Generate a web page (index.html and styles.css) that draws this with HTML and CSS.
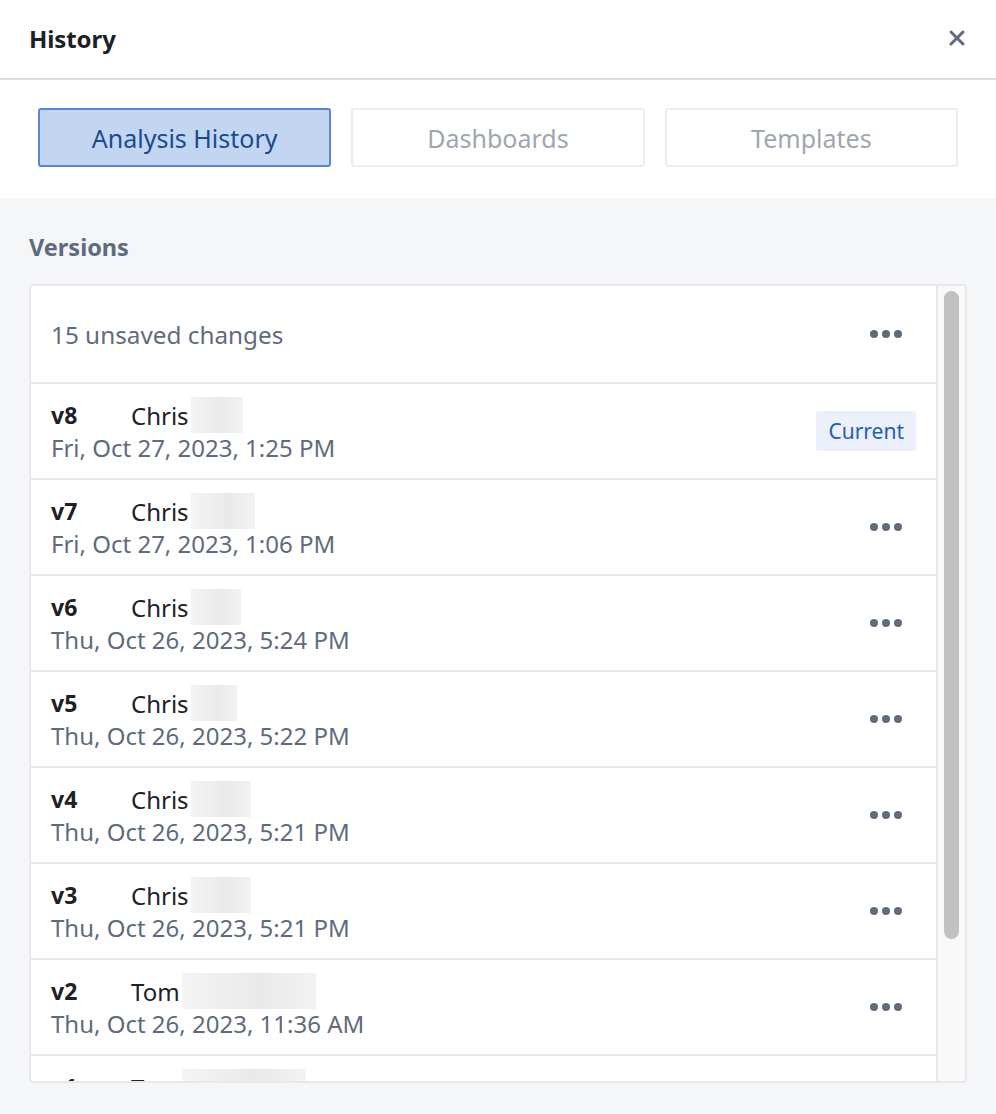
FILE: index.html
```html
<!DOCTYPE html>
<html>
<head>
<meta charset="utf-8">
<link rel="stylesheet" href="styles.css">
</head>
<body>
<div class="panel">
  <header class="header">
    <h1 class="title">History</h1>
    <svg class="close" width="18" height="18" viewBox="0 0 18 18"><path d="M3 3L15 15M15 3L3 15" stroke="#5f6b7c" stroke-width="3" stroke-linecap="round"/></svg>
  </header>
  <div class="tabs">
    <div class="tab active">Analysis History</div>
    <div class="tab">Dashboards</div>
    <div class="tab">Templates</div>
  </div>
  <section class="body">
    <h2 class="section-title">Versions</h2>
    <div class="list">
      <div class="rows">
        <div class="row unsaved">
          <span class="unsaved-text">15 unsaved changes</span>
          <span class="dots"><i></i><i></i><i></i></span>
        </div>
        <div class="row">
          <div class="info">
            <div class="line1"><span class="ver">v8</span><span class="name">Chris</span><span class="blur" style="width:52px"></span></div>
            <div class="date">Fri, Oct 27, 2023, 1:25 PM</div>
          </div>
          <span class="badge">Current</span>
        </div>
        <div class="row">
          <div class="info">
            <div class="line1"><span class="ver">v7</span><span class="name">Chris</span><span class="blur" style="width:64px"></span></div>
            <div class="date">Fri, Oct 27, 2023, 1:06 PM</div>
          </div>
          <span class="dots"><i></i><i></i><i></i></span>
        </div>
        <div class="row">
          <div class="info">
            <div class="line1"><span class="ver">v6</span><span class="name">Chris</span><span class="blur" style="width:50px"></span></div>
            <div class="date">Thu, Oct 26, 2023, 5:24 PM</div>
          </div>
          <span class="dots"><i></i><i></i><i></i></span>
        </div>
        <div class="row">
          <div class="info">
            <div class="line1"><span class="ver">v5</span><span class="name">Chris</span><span class="blur" style="width:46px"></span></div>
            <div class="date">Thu, Oct 26, 2023, 5:22 PM</div>
          </div>
          <span class="dots"><i></i><i></i><i></i></span>
        </div>
        <div class="row">
          <div class="info">
            <div class="line1"><span class="ver">v4</span><span class="name">Chris</span><span class="blur" style="width:60px"></span></div>
            <div class="date">Thu, Oct 26, 2023, 5:21 PM</div>
          </div>
          <span class="dots"><i></i><i></i><i></i></span>
        </div>
        <div class="row">
          <div class="info">
            <div class="line1"><span class="ver">v3</span><span class="name">Chris</span><span class="blur" style="width:60px"></span></div>
            <div class="date">Thu, Oct 26, 2023, 5:21 PM</div>
          </div>
          <span class="dots"><i></i><i></i><i></i></span>
        </div>
        <div class="row">
          <div class="info">
            <div class="line1"><span class="ver">v2</span><span class="name">Tom</span><span class="blur" style="width:134px"></span></div>
            <div class="date">Thu, Oct 26, 2023, 11:36 AM</div>
          </div>
          <span class="dots"><i></i><i></i><i></i></span>
        </div>
        <div class="row">
          <div class="info">
            <div class="line1"><span class="ver">v1</span><span class="name">Tom</span><span class="blur" style="width:124px"></span></div>
            <div class="date">Thu, Oct 26, 2023, 11:30 AM</div>
          </div>
          <span class="dots"><i></i><i></i><i></i></span>
        </div>
      </div>
      <div class="scrollbar"><div class="thumb"></div></div>
    </div>
  </section>
</div>
</body>
</html>
```

FILE: styles.css
```css
* { box-sizing: border-box; margin: 0; padding: 0; }
html, body { width: 996px; height: 1114px; overflow: hidden; }
body {
  font-family: "Noto Sans", "Open Sans", sans-serif;
  background: #f5f6f8;
  color: #1c2127;
}
.panel { display: flex; flex-direction: column; height: 1114px; }
.header {
  height: 80px;
  background: #fff;
  border-bottom: 2px solid #dcdee2;
  display: flex;
  align-items: center;
  justify-content: space-between;
  padding: 0 30px 2px 29px;
}
.title { font-size: 24px; font-weight: 700; color: #1c2127; letter-spacing: -0.1px; }
.close { display: block; }
.tabs {
  background: #fff;
  height: 118px;
  display: grid;
  grid-template-columns: 1fr 1fr 1fr;
  gap: 20px;
  padding: 28px 38px 31px 38px;
}
.tab {
  border: 2px solid #ebedf0;
  border-radius: 3px;
  display: flex;
  align-items: center;
  justify-content: center;
  font-size: 25px;
  color: #9ea6b2;
}
.tab.active {
  background: #c3d6f1;
  border-color: #5a87cb;
  color: #1c4a8c;
}
.body { flex: 1; padding: 31px 29px 30px 29px; display: flex; flex-direction: column; }
.section-title { font-size: 23.5px; font-weight: 700; color: #5f6b7c; height: 35px; line-height: 33px; padding-top: 2px; margin-bottom: 20px; }
.list {
  height: 799px;
  background: #fff;
  border: 2px solid #e6e8eb;
  border-radius: 4px;
  display: flex;
  overflow: hidden;
}
.rows { flex: 1; border-right: 2px solid #e6e8eb; overflow: hidden; }
.row {
  height: 96px;
  border-bottom: 2px solid #e6e8eb;
  display: flex;
  align-items: center;
  justify-content: space-between;
  padding: 0 32px 0 20px;
}
.row.unsaved { height: 98px; }
.unsaved-text { font-size: 24.3px; color: #5f6b7c; }
.dots { display: flex; gap: 4px; margin-right: 2px; }
.dots i { width: 8px; height: 8px; border-radius: 50%; background: #5f6b7c; display: block; }
.info { display: flex; flex-direction: column; }
.line1 { display: flex; align-items: center; height: 34px; }
.ver { width: 80px; font-size: 23px; font-weight: 700; color: #1c2127; }
.name { font-size: 24px; color: #1c2127; }
.blur {
  height: 36px;
  display: inline-block;
  background: linear-gradient(90deg, #f4f4f4, #e9e9e9 60%, #f3f3f3);
  margin-left: 2px;
}
.date { font-size: 24px; color: #5f6b7c; height: 32px; line-height: 32px; }
.badge {
  background: #ebf0fa;
  color: #1f5fb8;
  font-size: 21px;
  border-radius: 3px;
  padding: 0 12px;
  height: 40px;
  line-height: 40px;
  margin-right: -12px;
}
.scrollbar { width: 27px; background: #f9f9fa; padding: 5px 6px 0 6px; }
.thumb { width: 15px; height: 648px; background: #c1c1c1; border-radius: 8px; }
```
